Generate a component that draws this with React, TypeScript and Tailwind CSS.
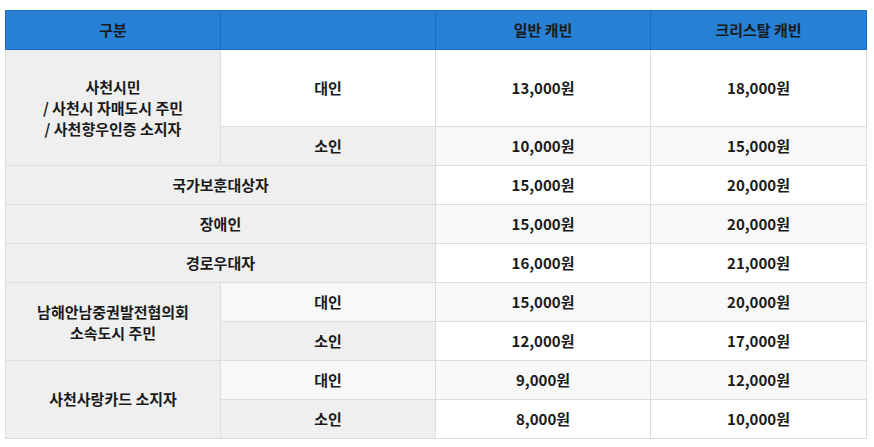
const th = "border border-[#dddddd] bg-[#efefef] text-center align-middle";
const td = "border border-[#dddddd] text-center align-middle";

type Row = { label?: string; sub?: string; a: string; b: string; even: boolean };

const App = () => {
  return (
    <div className="pl-[5px] pt-[10px] font-['Noto_Sans_CJK_KR','Noto_Sans',sans-serif] text-[15px] font-semibold text-[#1a1a1a]">
      <table className="w-[861px] table-fixed border-collapse">
        <colgroup>
          <col className="w-[215px]" />
          <col className="w-[215px]" />
          <col className="w-[215px]" />
          <col className="w-[216px]" />
        </colgroup>
        <thead>
          <tr className="h-[39px] bg-[#2680d4]">
            <th className="border border-[#1a6cc2] font-semibold">구분</th>
            <th className="border border-[#1a6cc2] font-semibold"></th>
            <th className="border border-[#1a6cc2] font-semibold">일반 캐빈</th>
            <th className="border border-[#1a6cc2] font-semibold">크리스탈 캐빈</th>
          </tr>
        </thead>
        <tbody>
          <tr className="h-[77px]">
            <th rowSpan={2} className={`${th} font-semibold leading-[21px]`}>
              사천시민
              <br />/ 사천시 자매도시 주민
              <br />/ 사천향우인증 소지자
            </th>
            <td className={`${td} bg-white`}>대인</td>
            <td className={`${td} bg-white`}>13,000원</td>
            <td className={`${td} bg-white`}>18,000원</td>
          </tr>
          <tr className="h-[39px]">
            <th className={`${th} font-semibold`}>소인</th>
            <td className={`${td} bg-[#f8f8f8]`}>10,000원</td>
            <td className={`${td} bg-[#f8f8f8]`}>15,000원</td>
          </tr>
          {(
            [
              { label: "국가보훈대상자", a: "15,000원", b: "20,000원", even: false },
              { label: "장애인", a: "15,000원", b: "20,000원", even: true },
              { label: "경로우대자", a: "16,000원", b: "21,000원", even: false },
            ] as Row[]
          ).map((r) => (
            <tr key={r.label} className="h-[39px]">
              <th colSpan={2} className={`${th} font-semibold`}>
                {r.label}
              </th>
              <td className={`${td} ${r.even ? "bg-[#f8f8f8]" : "bg-white"}`}>{r.a}</td>
              <td className={`${td} ${r.even ? "bg-[#f8f8f8]" : "bg-white"}`}>{r.b}</td>
            </tr>
          ))}
          <tr className="h-[39px]">
            <th rowSpan={2} className={`${th} font-semibold leading-[21px]`}>
              남해안남중권발전협의회
              <br />
              소속도시 주민
            </th>
            <td className={`${td} bg-[#f8f8f8]`}>대인</td>
            <td className={`${td} bg-[#f8f8f8]`}>15,000원</td>
            <td className={`${td} bg-[#f8f8f8]`}>20,000원</td>
          </tr>
          <tr className="h-[39px]">
            <th className={`${th} font-semibold`}>소인</th>
            <td className={`${td} bg-white`}>12,000원</td>
            <td className={`${td} bg-white`}>17,000원</td>
          </tr>
          <tr className="h-[39px]">
            <th rowSpan={2} className={`${th} font-semibold`}>
              사천사랑카드 소지자
            </th>
            <td className={`${td} bg-[#f8f8f8]`}>대인</td>
            <td className={`${td} bg-[#f8f8f8]`}>9,000원</td>
            <td className={`${td} bg-[#f8f8f8]`}>12,000원</td>
          </tr>
          <tr className="h-[39px]">
            <th className={`${th} font-semibold`}>소인</th>
            <td className={`${td} bg-white`}>8,000원</td>
            <td className={`${td} bg-white`}>10,000원</td>
          </tr>
        </tbody>
      </table>
    </div>
  );
};

export default App;
